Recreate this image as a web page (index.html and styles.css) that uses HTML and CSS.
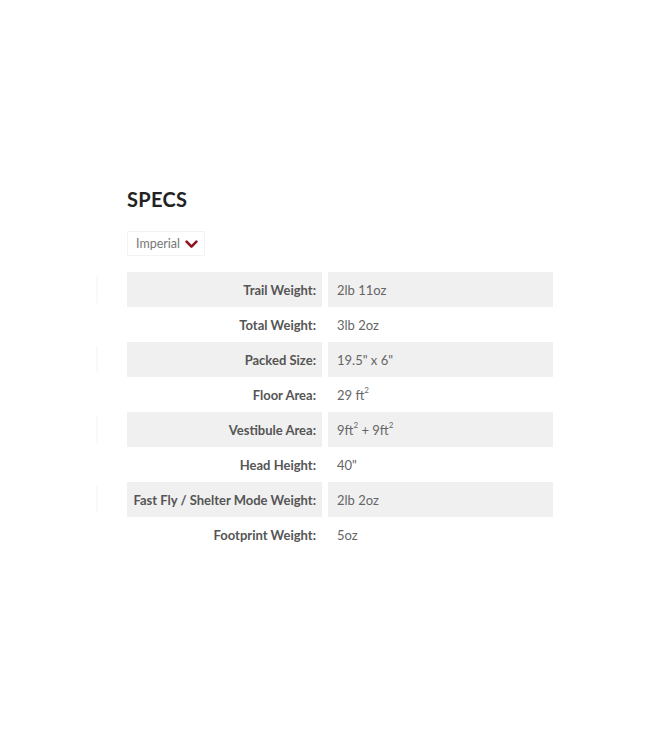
FILE: index.html
```html
<!DOCTYPE html>
<html>
<head>
<meta charset="utf-8">
<link rel="stylesheet" href="styles.css">
</head>
<body>
<section class="specs">
  <h2 class="specs-title">SPECS</h2>
  <div class="unit-select">
    <span class="unit-label">Imperial</span>
    <svg class="chevron" width="13" height="9" viewBox="0 0 13 9"><path d="M1.6 1.6 L6.5 6.6 L11.4 1.6" fill="none" stroke="#8f1420" stroke-width="2.6" stroke-linecap="round" stroke-linejoin="round"/></svg>
  </div>
  <div class="spec-table">
    <div class="spec-row shaded"><div class="spec-key">Trail Weight:</div><div class="spec-val"><span>2lb 11oz</span></div></div>
    <div class="spec-row"><div class="spec-key">Total Weight:</div><div class="spec-val"><span>3lb 2oz</span></div></div>
    <div class="spec-row shaded"><div class="spec-key">Packed Size:</div><div class="spec-val"><span>19.5" x 6"</span></div></div>
    <div class="spec-row"><div class="spec-key">Floor Area:</div><div class="spec-val"><span>29 ft<sup>2</sup></span></div></div>
    <div class="spec-row shaded"><div class="spec-key">Vestibule Area:</div><div class="spec-val"><span>9ft<sup>2</sup> + 9ft<sup>2</sup></span></div></div>
    <div class="spec-row"><div class="spec-key">Head Height:</div><div class="spec-val"><span>40"</span></div></div>
    <div class="spec-row shaded"><div class="spec-key">Fast Fly / Shelter Mode Weight:</div><div class="spec-val"><span>2lb 2oz</span></div></div>
    <div class="spec-row"><div class="spec-key">Footprint Weight:</div><div class="spec-val"><span>5oz</span></div></div>
  </div>
</section>
</body>
</html>
```
FILE: styles.css
```css
html, body {
  margin: 0;
  padding: 0;
  background: #ffffff;
}
body {
  font-family: "Lato", "Open Sans", "Liberation Sans", sans-serif;
}
.specs {
  padding: 187px 0 0 127px;
  width: 426px;
}
.specs-title {
  margin: 0;
  font-size: 20px;
  line-height: 24px;
  font-weight: 700;
  color: #222222;
  letter-spacing: 0.3px;
}
.unit-select {
  margin-top: 20px;
  display: inline-flex;
  align-items: center;
  gap: 5px;
  height: 25px;
  padding: 0 6px 0 8px;
  border: 1px solid #f3f3f3;
  box-sizing: border-box;
}
.unit-label {
  font-size: 12.5px;
  color: #777777;
}
.chevron {
  display: block;
  flex-shrink: 0;
  margin-top: 1px;
}
.spec-table {
  margin-top: 16px;
  display: flex;
  flex-direction: column;
}
.spec-row {
  display: grid;
  grid-template-columns: 195px 225px;
  column-gap: 6px;
  height: 35px;
  align-items: stretch;
  position: relative;
}
.spec-row.shaded::before {
  content: "";
  position: absolute;
  left: -31px;
  top: 4px;
  bottom: 4px;
  width: 2px;
  background: #f9f9f9;
}
.spec-row.shaded .spec-key,
.spec-row.shaded .spec-val {
  background: #f0f0f0;
}
.spec-key {
  display: flex;
  align-items: center;
  justify-content: flex-end;
  padding-right: 6px;
  font-size: 13px;
  font-weight: 700;
  color: #555555;
}
.spec-val {
  display: flex;
  align-items: center;
  padding-left: 9px;
  font-size: 13px;
  color: #666666;
}
.spec-val sup {
  font-size: 8px;
  line-height: 0;
  position: relative;
  top: -1px;
}
```
